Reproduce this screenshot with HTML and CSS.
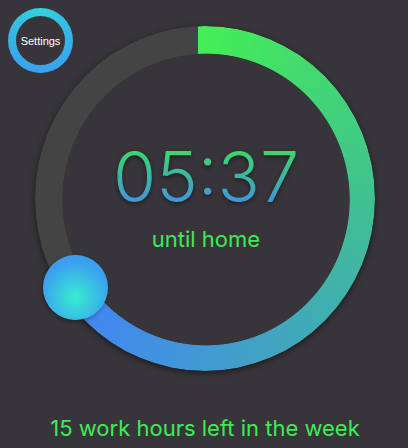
FILE: index.html
```html
<!DOCTYPE html>
<html lang="en">
<head>
<meta charset="utf-8">
<meta name="viewport" content="width=device-width, initial-scale=1">
<title>Work countdown</title>
<link rel="stylesheet" href="styles.css">
</head>
<body>
<button class="settings" type="button">Settings</button>
<main class="page">
  <section class="dial">
    <div class="ring-shadow"><div class="ring"></div></div>
    <div class="readout">
      <time class="time">05:37</time>
      <p class="caption">until home</p>
    </div>
    <div class="knob"></div>
  </section>
  <p class="summary">15 work hours left in the week</p>
</main>
</body>
</html>
```
FILE: styles.css
```css
* {
  box-sizing: border-box;
}

body {
  margin: 0;
  background: #38353a;
  color: #3cec55;
  font-family: Inter, "Liberation Sans", sans-serif;
}

p {
  margin: 0;
}

.page {
  display: flex;
  flex-direction: column;
  align-items: center;
  gap: 43px;
  padding: 26px 33px 4px 35px;
}

.dial {
  position: relative;
  display: grid;
  width: 100%;
  max-width: 480px;
  aspect-ratio: 340 / 345;
}

.ring-shadow,
.readout {
  grid-area: 1 / 1;
}

.ring-shadow {
  display: grid;
  border-radius: 50%;
  box-shadow: 0 2px 6px rgba(0, 0, 0, 0.5);
}

.ring {
  border-radius: 50%;
  background: conic-gradient(at 48% 50%, #44ee55 0deg, #40c191 90deg, #4199d3 178deg, #4285f6 228deg, #4285f6 236deg, #444444 236deg);
  mask: radial-gradient(closest-side at calc(50% + 1px) calc(50% + 1px), transparent 84.8%, #000 85.3%);
}

.readout {
  display: flex;
  flex-direction: column;
  align-items: center;
  justify-content: center;
  gap: 8px;
  padding: 0 0 7px 2px;
}

.time {
  font-size: 70px;
  font-weight: 300;
  line-height: 80px;
  background: linear-gradient(#38e060 10%, #4285f4 96%);
  -webkit-background-clip: text;
  background-clip: text;
  color: transparent;
  filter: drop-shadow(0 2px 2px rgba(0, 0, 0, 0.45));
}

.caption,
.summary {
  font-size: 22px;
  line-height: 28px;
  text-align: center;
}

.knob {
  position: absolute;
  left: 12%;
  top: 76%;
  width: 65px;
  height: 65px;
  margin: -33px;
  border-radius: 50%;
  background: radial-gradient(circle at 50% 65%, #38ecd2, #3b9ef0 68%);
  box-shadow: -1px 2px 4px rgba(0, 0, 0, 0.3);
}

.settings {
  position: absolute;
  z-index: 1;
  left: 8px;
  top: 8px;
  width: 65px;
  height: 65px;
  padding: 0;
  border: 8px solid transparent;
  border-radius: 50%;
  background:
    linear-gradient(#38353a, #38353a) padding-box,
    radial-gradient(circle at 50% 0, #33d2dc, #3b9bf0) border-box;
  color: #ffffff;
  font: 11px "Liberation Sans", sans-serif;
}
```
